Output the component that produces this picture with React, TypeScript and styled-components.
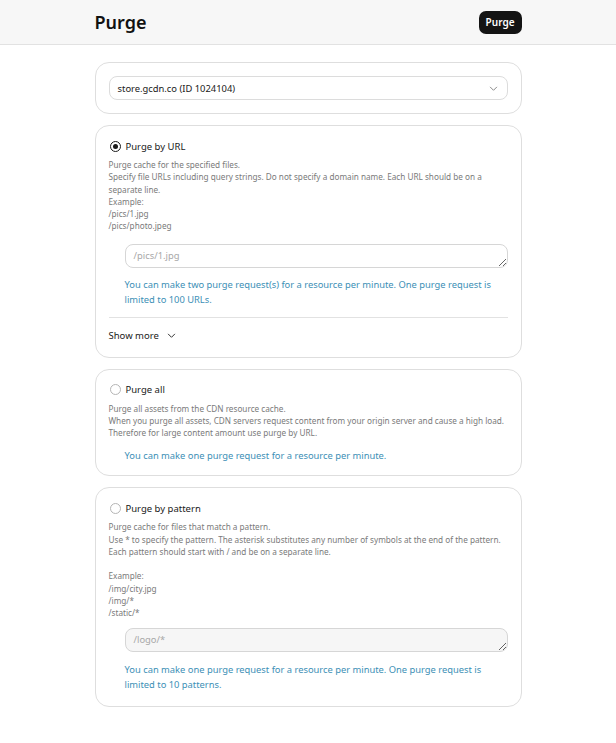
import React from "react";
import styled, { createGlobalStyle } from "styled-components";

const GlobalStyle = createGlobalStyle`
  html, body { margin: 0; padding: 0; background: #ffffff; }
  body { font-family: "Noto Sans", "Open Sans", sans-serif; color: #1a1a1a; }
  * { box-sizing: border-box; }
`;

const Header = styled.header`
  background: #f7f7f7;
  border-bottom: 1px solid #e2e2e2;
  height: 45px;
  display: flex;
  align-items: center;
`;

const Column = styled.div`
  width: 427px;
  margin: 0 auto;
`;

const HeaderInner = styled(Column)`
  display: flex;
  align-items: center;
  justify-content: space-between;
`;

const Title = styled.h1`
  margin: 0;
  font-size: 18px;
  font-weight: 600;
  color: #111;
  line-height: 24px;
`;

const PrimaryButton = styled.button`
  background: #141414;
  color: #fff;
  border: none;
  border-radius: 7px;
  height: 23px;
  padding: 0 7px;
  font-family: inherit;
  font-size: 10px;
  font-weight: 600;
  cursor: pointer;
`;

const Main = styled(Column)`
  display: flex;
  flex-direction: column;
  gap: 11px;
  padding: 17px 0 30px;
`;

const Card = styled.section<{ $pt?: number; $pb?: number }>`
  border: 1px solid #dedede;
  border-radius: 14px;
  padding: ${(p) => p.$pt ?? 13}px 13px ${(p) => p.$pb ?? 14}px;
  display: flex;
  flex-direction: column;
`;

const Select = styled.div`
  height: 24px;
  border: 1px solid #dcdcdc;
  border-radius: 8px;
  display: flex;
  align-items: center;
  justify-content: space-between;
  padding: 0 9px 0 8px;
  font-size: 9.4px;
  color: #1a1a1a;
`;

const OptionRow = styled.label`
  display: flex;
  align-items: center;
  gap: 5px;
  height: 14px;
  font-size: 9.5px;
  color: #1a1a1a;
  padding-left: 1px;
`;

const Radio = styled.span<{ $checked?: boolean }>`
  width: 11px;
  height: 11px;
  border-radius: 50%;
  border: 1px solid ${(p) => (p.$checked ? "#1a1a1a" : "#b5b5b5")};
  display: inline-flex;
  align-items: center;
  justify-content: center;
  flex: none;
  &::after {
    content: "";
    width: 5px;
    height: 5px;
    border-radius: 50%;
    background: #1a1a1a;
    display: ${(p) => (p.$checked ? "block" : "none")};
  }
`;

const Description = styled.div`
  margin-top: 6px;
  font-size: 8.2px;
  line-height: 12.25px;
  color: #7a7a7a;
`;

const Indented = styled.div<{ $top?: number }>`
  margin-left: 16px;
  margin-top: ${(p) => p.$top ?? 10}px;
`;

const TextArea = styled.textarea<{ $muted?: boolean }>`
  display: block;
  width: 100%;
  height: 24px;
  min-height: 24px;
  border: 1px solid #d6d6d6;
  border-radius: 8px;
  background: ${(p) => (p.$muted ? "#f6f6f6" : "#ffffff")};
  resize: vertical;
  padding: 5px 8px;
  font-family: inherit;
  font-size: 9.4px;
  line-height: 12px;
  color: #1a1a1a;
  outline: none;
  &::placeholder { color: #a8a8a8; }
`;

const Hint = styled.p`
  margin: 0;
  font-size: 9.35px;
  line-height: 15px;
  color: #3c8fb6;
`;

const Divider = styled.hr`
  border: none;
  border-top: 1px solid #e2e2e2;
  margin: 10px 0 0;
`;

const ShowMore = styled.button`
  margin-top: 11px;
  background: none;
  border: none;
  padding: 0;
  display: flex;
  align-items: center;
  gap: 8px;
  height: 14px;
  font-family: inherit;
  font-size: 9.5px;
  color: #1a1a1a;
  cursor: pointer;
  align-self: flex-start;
`;

const Chevron = ({ size = 8, color = "#555" }: { size?: number; color?: string }) => (
  <svg width={size} height={size} viewBox="0 0 10 10" fill="none">
    <path d="M1.5 3.5 L5 7 L8.5 3.5" stroke={color} strokeWidth="1.1" strokeLinecap="round" strokeLinejoin="round" />
  </svg>
);

export default function App() {
  return (
    <>
      <GlobalStyle />
      <Header>
        <HeaderInner>
          <Title>Purge</Title>
          <PrimaryButton>Purge</PrimaryButton>
        </HeaderInner>
      </Header>
      <Main>
        <Card $pt={13} $pb={13}>
          <Select>
            <span>store.gcdn.co (ID 1024104)</span>
            <Chevron size={9} color="#8a8a8a" />
          </Select>
        </Card>

        <Card>
          <OptionRow>
            <Radio $checked />
            Purge by URL
          </OptionRow>
          <Description>
            Purge cache for the specified files.
            <br />
            Specify file URLs including query strings. Do not specify a domain name. Each URL should be on a
            separate line.
            <br />
            Example:
            <br />
            /pics/1.jpg
            <br />
            /pics/photo.jpeg
          </Description>
          <Indented $top={11}>
            <TextArea placeholder="/pics/1.jpg" />
          </Indented>
          <Indented $top={9}>
            <Hint>
              You can make two purge request(s) for a resource per minute. One purge request is limited to 100 URLs.
            </Hint>
          </Indented>
          <Divider />
          <ShowMore>
            Show more
            <Chevron size={9} color="#333" />
          </ShowMore>
        </Card>

        <Card $pb={12}>
          <OptionRow>
            <Radio />
            Purge all
          </OptionRow>
          <Description>
            Purge all assets from the CDN resource cache.
            <br />
            When you purge all assets, CDN servers request content from your origin server and cause a high load.
            <br />
            Therefore for large content amount use purge by URL.
          </Description>
          <Indented $top={9}>
            <Hint>You can make one purge request for a resource per minute.</Hint>
          </Indented>
        </Card>

        <Card>
          <OptionRow>
            <Radio />
            Purge by pattern
          </OptionRow>
          <Description>
            Purge cache for files that match a pattern.
            <br />
            Use * to specify the pattern. The asterisk substitutes any number of symbols at the end of the pattern.
            <br />
            Each pattern should start with / and be on a separate line.
            <br />
            <br />
            Example:
            <br />
            /img/city.jpg
            <br />
            /img/*
            <br />
            /static/*
          </Description>
          <Indented $top={9}>
            <TextArea $muted placeholder="/logo/*" />
          </Indented>
          <Indented $top={10}>
            <Hint>
              You can make one purge request for a resource per minute. One purge request is limited to 10 patterns.
            </Hint>
          </Indented>
        </Card>
      </Main>
    </>
  );
}
